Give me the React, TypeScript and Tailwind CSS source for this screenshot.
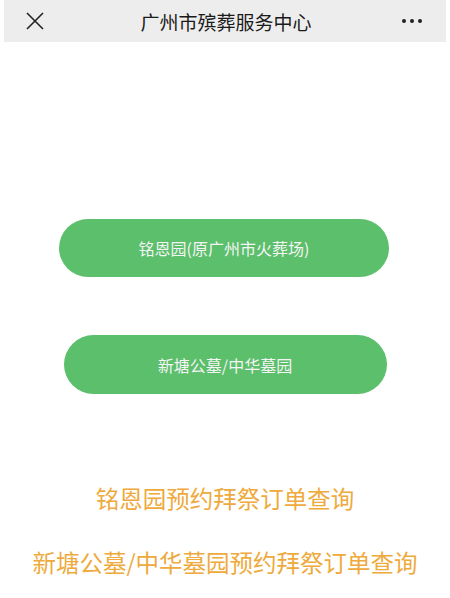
const font = { fontFamily: '"Noto Sans CJK SC", "Noto Sans", sans-serif' };

const CloseIcon = () => (
  <svg width="18" height="18" viewBox="0 0 18 18" fill="none" stroke="#222" strokeWidth="1.6">
    <path d="M1 1 L17 17 M17 1 L1 17" />
  </svg>
);

const MoreIcon = () => (
  <div className="flex gap-[4px]">
    <span className="w-[4px] h-[4px] rounded-full bg-[#222]" />
    <span className="w-[4px] h-[4px] rounded-full bg-[#222]" />
    <span className="w-[4px] h-[4px] rounded-full bg-[#222]" />
  </div>
);

const App = () => {
  return (
    <div className="w-[450px] h-[598px] bg-white overflow-hidden" style={font}>
      <div className="mx-[4px] h-[42px] bg-[#ededed] flex items-center justify-between pl-[22px] pr-[24px]">
        <CloseIcon />
        <div className="text-[19px] text-[#1a1a1a] leading-none pl-[6px]">广州市殡葬服务中心</div>
        <MoreIcon />
      </div>

      <div className="flex flex-col items-center">
        <button className="mt-[177px] ml-[-2px] w-[330px] h-[58px] rounded-full bg-[#5bbf6b] text-[#f4f4f4] text-[16px] leading-none">
          铭恩园(原广州市火葬场)
        </button>
        <button className="mt-[58px] w-[323px] h-[59px] rounded-full bg-[#5bbf6b] text-[#f4f4f4] text-[16px] leading-none">
          新塘公墓/中华墓园
        </button>

        <div className="mt-[93px] text-[23.5px] text-[#eeaa3c] leading-none">铭恩园预约拜祭订单查询</div>
        <div className="mt-[40px] text-[23.5px] text-[#eeaa3c] leading-none">新塘公墓/中华墓园预约拜祭订单查询</div>
      </div>
    </div>
  );
};

export default App;
